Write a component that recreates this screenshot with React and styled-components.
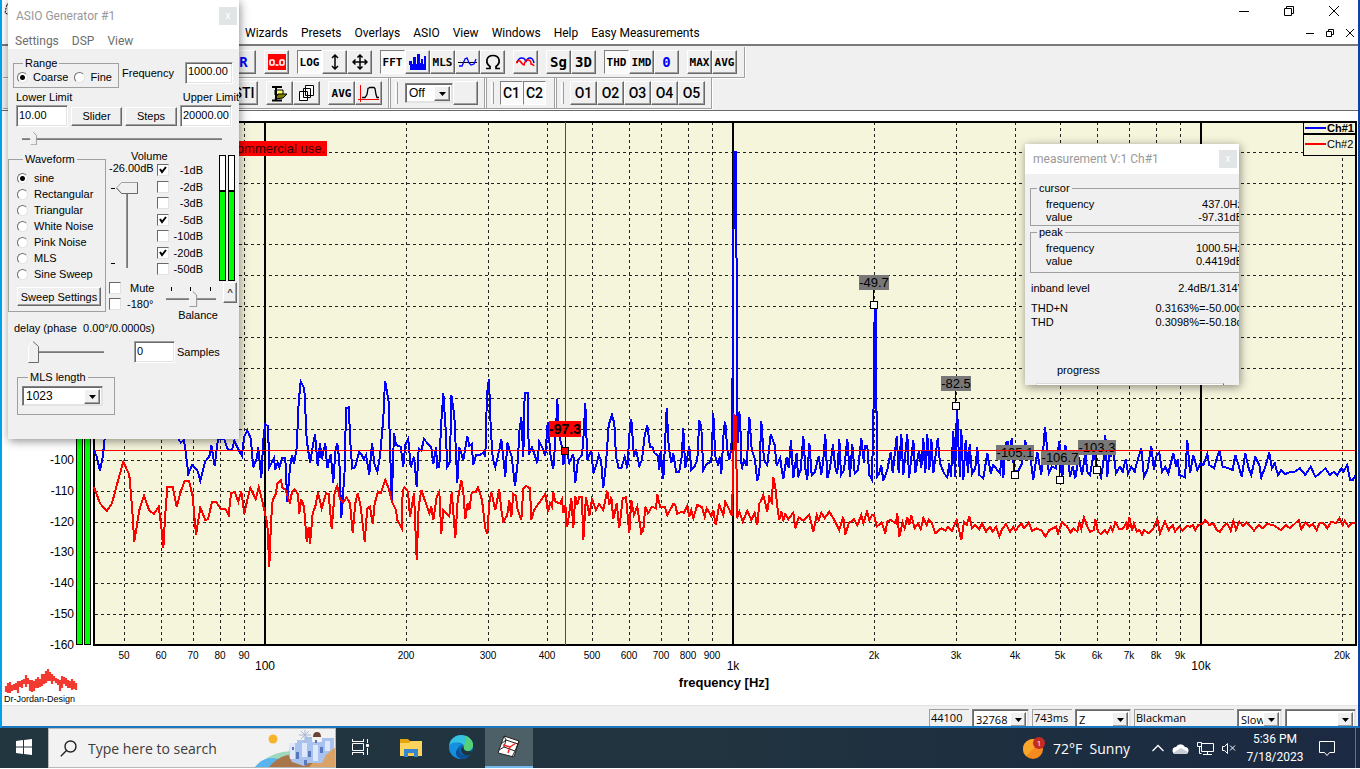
import React from "react";
import styled, { createGlobalStyle, css } from "styled-components";

const SYS = `"Liberation Sans", Arial, sans-serif`;
const UI = `"Open Sans", "Noto Sans", sans-serif`;
const MENU = `Roboto, "Open Sans", sans-serif`;

const GlobalStyle = createGlobalStyle`
  *, *::before, *::after { box-sizing: border-box; }
  body { margin: 0; background: #fff; font-family: ${SYS}; font-size: 11px; color: #000; }
  button, input, select { font: inherit; color: inherit; margin: 0; padding: 0; border-radius: 0; }
`;

const svgUrl = (w, h, body) =>
  `url("data:image/svg+xml,${encodeURIComponent(
    `<svg xmlns='http://www.w3.org/2000/svg' width='${w}' height='${h}' viewBox='0 0 ${w} ${h}'>${body}</svg>`
  )}")`;

const raised = css`
  background: #f0f0f0;
  border: 1px solid;
  border-color: #fff #696969 #696969 #fff;
  box-shadow: inset -1px -1px 0 #a0a0a0;
`;
const sunken = css`
  background: #fff;
  border: 1px solid;
  border-color: #a0a0a0 #fff #fff #a0a0a0;
  box-shadow: inset 1px 1px 0 #696969, inset -1px -1px 0 #e3e3e3;
`;

/* ---------- desktop and main window ---------- */
const Desktop = styled.div`
  position: relative;
  display: flex;
  flex-direction: column;
  min-height: 100vh;
  padding-bottom: 1px;
  overflow: hidden;
`;
const MainWindow = styled.main`
  flex: 1;
  display: flex;
  flex-direction: column;
  border: 2px solid #1b76bd;
  border-left-color: #00a2ed;
  border-right-color: #1242a0;
  border-top: 0;
  background: #fff;
`;
const TitleBar = styled.header`
  display: flex;
  align-items: center;
  justify-content: space-between;
  height: 24px;
  padding: 0 19px 2px 2px;
`;
const CaptionButtons = styled.div`
  display: flex;
  gap: ${(p) => p.$gap}px;
`;
const GlyphButton = styled.button`
  display: flex;
  background: none;
  border: 0;
`;
const MenuBar = styled.nav`
  display: flex;
  align-items: center;
  height: 20px;
  padding: 0 4px 2px 243px;
  font-family: ${MENU};
  font-size: 12px;
`;
const MenuItems = styled.div`
  display: flex;
  flex: 1;
  gap: 13px;
`;
const MenuItem = styled.button`
  background: none;
  border: 0;
  line-height: 16px;
  color: ${(p) => (p.$dim ? "#6d6d6d" : "#000")};
`;

/* ---------- tool bars ---------- */
const ToolBars = styled.div`
  height: 67px;
  padding: 1px 0 0 1px;
  background: #f0f0f0;
  border-top: 2px solid #7a7a7a;
  border-bottom: 1px solid #696969;
`;
const ToolRow = styled.div`
  display: flex;
  align-items: center;
  height: 31px;
  width: ${(p) => p.$w}px;
  padding-left: ${(p) => p.$start}px;
  border-bottom: 1px solid #a0a0a0;
  border-right: 1px solid #a0a0a0;
  box-shadow: 0 1px 0 #fff, 1px 0 0 #fff;
`;
const ToolGroup = styled.div`
  display: flex;
  align-items: center;
  flex: none;
  margin-right: ${(p) => p.$after || 8}px;
`;
const ToolButton = styled.button`
  display: flex;
  flex: none;
  align-items: center;
  justify-content: center;
  width: ${(p) => p.$w || 25}px;
  height: 24px;
  ${raised}
  white-space: nowrap;
  font-family: "DejaVu Sans Mono", monospace;
  font-weight: 700;
  font-size: ${(p) => p.$size || 11}px;
  color: ${(p) => p.$color || "#000"};
  ${(p) =>
    p.$sans &&
    css`
      font-family: ${MENU};
      font-weight: 500;
    `}
  ${(p) =>
    p.$on &&
    css`
      background: #fafafa;
      border-color: #808080 #fff #fff #808080;
      box-shadow: none;
    `}
`;
const Divider = styled.i`
  flex: none;
  width: 3px;
  height: 30px;
  border: solid #a0a0a0;
  border-width: 0 1px;
  background: #fff;
`;
const Grip = styled.i`
  flex: none;
  width: 3px;
  height: 22px;
  margin: 0 ${(p) => p.$after}px 0 4px;
  border-right: 1px solid #a0a0a0;
  border-left: 1px solid #fff;
`;

/* ---------- shared controls ---------- */
const ComboFrame = styled.span`
  position: relative;
  display: block;
  flex: none;
  width: ${(p) => p.$w}px;
  height: ${(p) => p.$h || 20}px;
  ${sunken}
  border-color: #808080 #e3e3e3 #e3e3e3 #808080;
  font-family: ${(p) => p.$font || SYS};
  font-size: ${(p) => p.$size || 12}px;
  &::after {
    content: "";
    position: absolute;
    top: 2px;
    right: 2px;
    bottom: 1px;
    width: 16px;
    ${raised}
    background: #f0f0f0 ${svgUrl(7, 4, "<path d='M0 0h7L3.5 4z'/>")} center no-repeat;
    pointer-events: none;
  }
`;
const ComboSelect = styled.select`
  appearance: none;
  display: block;
  width: 100%;
  height: 100%;
  padding: 0 18px 0 3px;
  border: 0;
  background: transparent;
  outline: 0;
`;
function Combo({ label, value, ...rest }) {
  return (
    <ComboFrame {...rest}>
      <ComboSelect aria-label={label} defaultValue={value}>
        <option>{value}</option>
      </ComboSelect>
    </ComboFrame>
  );
}
const TextBox = styled.input`
  width: ${(p) => p.$w}px;
  height: 22px;
  padding: 0 1px 3px 2px;
  ${sunken}
  font-size: 11px;
  outline: 0;
`;
const PushButton = styled.button`
  width: ${(p) => p.$w}px;
  height: ${(p) => p.$h || 19}px;
  ${raised}
  white-space: nowrap;
`;
const Radio = styled.input.attrs({ type: "radio" })`
  appearance: none;
  flex: none;
  width: 11px;
  height: 11px;
  border-radius: 50%;
  border: 1px solid;
  border-color: #707070 #e3e3e3 #e3e3e3 #707070;
  background: #fff;
  &:checked {
    background: radial-gradient(circle, #000 2px, #fff 3px);
  }
`;
const Check = styled.input.attrs({ type: "checkbox" })`
  appearance: none;
  flex: none;
  width: 12px;
  height: 12px;
  border: 1px solid;
  border-color: #696969 #e3e3e3 #e3e3e3 #696969;
  background: #fff;
  &:checked {
    background: #fff ${svgUrl(8, 8, "<path d='M1 3l2 3 4-5' fill='none' stroke='black' stroke-width='2'/>")} center no-repeat;
  }
`;
const GroupBox = styled.fieldset`
  margin: ${(p) => p.$top || 0}px 0 0;
  padding: ${(p) => p.$pad || "0"};
  min-width: 0;
  flex: none;
  width: ${(p) => p.$w}px;
  height: ${(p) => p.$h}px;
  border: 1px solid #a0a0a0;
`;
const Legend = styled.legend`
  margin-left: ${(p) => p.$x || 6}px;
  padding: 0 2px;
  line-height: 12px;
`;
const Option = styled.label`
  display: flex;
  align-items: center;
  gap: ${(p) => p.$gap || 6}px;
  line-height: 16px;
  white-space: nowrap;
`;

/* ---------- floating windows ---------- */
const FloatingWindow = styled.section`
  position: absolute;
  left: ${(p) => p.$x}px;
  top: ${(p) => p.$y}px;
  width: ${(p) => p.$w}px;
  height: ${(p) => p.$h}px;
  overflow: hidden;
  background: #f0f0f0;
  box-shadow: 1px 2px 9px rgba(0, 0, 0, 0.45);
`;
const FloatTitle = styled.header`
  display: flex;
  align-items: center;
  justify-content: space-between;
  height: ${(p) => p.$h}px;
  padding: 0 2px 0 8px;
  background: #fff;
  color: #999;
  font-family: ${MENU};
  font-size: 12px;
`;
const CloseBox = styled.button`
  width: 18px;
  height: 18px;
  border: 0;
  background: #e2e5e6;
  color: #fff;
  font-size: 10px;
  line-height: 12px;
`;
const FloatMenu = styled.nav`
  display: flex;
  gap: 13px;
  height: 17px;
  padding-left: 7px;
  background: #fff;
  font-family: ${MENU};
  font-size: 12px;
`;

const Line = styled.div`
  display: flex;
  align-items: ${(p) => p.$align || "center"};
  justify-content: ${(p) => p.$justify || "flex-start"};
  gap: ${(p) => p.$gap || 0}px;
  margin-top: ${(p) => p.$top || 0}px;
  padding: 0 ${(p) => p.$right || 0}px 0 ${(p) => p.$left || 0}px;
  line-height: 12px;
  white-space: nowrap;
`;
const Stack = styled.div`
  display: flex;
  flex: none;
  flex-direction: column;
  align-items: ${(p) => p.$align || "flex-start"};
  width: ${(p) => p.$w}px;
  padding-top: ${(p) => p.$top || 0}px;
`;
const FieldLabel = styled.label`
  width: ${(p) => (p.$w ? `${p.$w}px` : "auto")};
`;

const downThumb = svgUrl(11, 22, "<path d='M.5 5.5l4-5h1l5 5v16H.5z' fill='#f0f0f0' stroke='#fff'/><path d='M5 .5l5.500 5v16H.5' fill='none' stroke='#696969'/>");
const sideThumb = svgUrl(22, 12, "<path d='M5.500 .5h16v11h-16L.5 6z' fill='#f0f0f0' stroke='#a0a0a0'/><path d='M21.500 .5v11h-16L.5 6' fill='none' stroke='#696969'/>");

const HSlider = styled.input.attrs({ type: "range" })`
  appearance: none;
  display: block;
  width: ${(p) => p.$w}px;
  height: ${(p) => p.$h}px;
  background: linear-gradient(#a0a0a0, #696969) center / 100% 2px no-repeat;
  &::-webkit-slider-thumb {
    appearance: none;
    width: ${(p) => p.$t}px;
    height: ${(p) => p.$h}px;
    background: ${downThumb} center / 100% 100% no-repeat;
  }
`;
const VSlider = styled.input.attrs({ type: "range" })`
  appearance: none;
  display: block;
  writing-mode: vertical-lr;
  direction: rtl;
  width: 22px;
  height: 86px;
  background: linear-gradient(90deg, #a0a0a0, #696969) center / 2px 100% no-repeat;
  &::-webkit-slider-thumb {
    appearance: none;
    width: 22px;
    height: 12px;
    background: ${sideThumb} center no-repeat;
  }
`;
const VTicks = styled.span`
  width: 4px;
  height: 76px;
  margin-top: 6px;
  border: solid #000;
  border-width: 1px 0;
`;
const HTicks = styled.span`
  display: flex;
  justify-content: space-between;
  width: 40px;
  height: 4px;
  border: solid #000;
  border-width: 0 1px;
  &::before {
    content: "";
    width: 1px;
    margin-left: 18px;
    background: #000;
  }
`;
const DbList = styled.div`
  display: flex;
  flex-direction: column;
  justify-content: space-between;
  height: 113px;
  margin-top: 1px;
`;
const DbOption = styled.label`
  display: flex;
  align-items: center;
  justify-content: space-between;
  width: 46px;
  line-height: 14px;
`;
const MeterPair = styled.div`
  display: flex;
  gap: 2px;
  height: 126px;
`;
const Meter = styled.i`
  width: 7px;
  border: 1px solid #000;
  background: linear-gradient(#fff 34px, #000 34px, #000 36px, #0f0 36px);
`;

const MEASURE_ROWS = {
  cursor: [["frequency", "437.0Hz"], ["value", "-97.31dB"]],
  peak: [["frequency", "1000.5Hz"], ["value", "0.4419dB"]],
};
const MeasureBody = styled.div`
  width: 220px;
  padding: 8px 0 0 5px;
`;
const Reading = styled.div`
  display: flex;
  justify-content: space-between;
  line-height: ${(p) => p.$lh || 13}px;
  margin: ${(p) => p.$top || 0}px -${(p) => p.$over || 0}px 0 0;
  padding: 0 2px 0 ${(p) => p.$left || 1}px;
`;
const ProgressTrack = styled.div`
  width: 188px;
  height: 8px;
  margin: 6px 0 0 6px;
  border: 1px solid #dadada;
  border-right: 1px solid #696969;
  background: #fff;
`;

/* ---------- status bar ---------- */
const StatusBar = styled.footer`
  display: flex;
  justify-content: flex-end;
  gap: 3px;
  height: 21px;
  overflow: hidden;
  padding: 3px 2px 0 0;
  background: #f0f0f0;
  border-top: 1px solid #e3e3e3;
`;
const StatusCell = styled.span`
  width: ${(p) => p.$w}px;
  height: 17px;
  padding-left: 1px;
  border: solid #a0a0a0;
  border-width: 1px 0 0 1px;
  font-family: ${UI};
  font-size: 11px;
  line-height: 16px;
`;

/* ---------- task bar ---------- */
const TaskBar = styled.footer`
  display: flex;
  align-items: center;
  height: 40px;
  background: linear-gradient(90deg, #22363f, #20333f 55%, #1b2942);
  color: #fff;
  font-family: ${UI};
`;
const TaskButton = styled.button`
  display: flex;
  align-items: center;
  justify-content: center;
  width: ${(p) => p.$w || 48}px;
  height: 40px;
  margin-right: ${(p) => p.$after || 0}px;
  border: 0;
  border-bottom: 2px solid ${(p) => (p.$active ? "#76b9ed" : "transparent")};
  background: ${(p) => (p.$active ? "#4e6067" : "none")};
`;
const SearchBox = styled.label`
  display: flex;
  align-items: center;
  width: 288px;
  height: 40px;
  padding-left: 11px;
  background: #f2f2f2;
  border: 1px solid #b5b9bb;
`;
const SearchInput = styled.input`
  width: 167px;
  height: 30px;
  margin-left: 11px;
  border: 0;
  outline: 0;
  background: transparent;
  font-size: 14px;
  &::placeholder { color: #3c3c3c; opacity: 1; }
`;
const Tray = styled.div`
  display: flex;
  align-items: center;
  margin-left: auto;
  padding-right: 4px;
`;
const Weather = styled.button`
  display: flex;
  align-items: center;
  gap: 8px;
  margin-right: 22px;
  background: none;
  border: 0;
  color: #fff;
  font-size: 14px;
  white-space: pre;
`;
const TrayIcons = styled.div`
  display: flex;
  align-items: center;
  gap: 8px;
`;
const Clock = styled.time`
  width: 60px;
  margin: 0 14px 0 8px;
  text-align: center;
  font-family: ${MENU};
  font-size: 12px;
  line-height: 18px;
`;
const ShowDesktop = styled.i`
  width: 1px;
  height: 40px;
  margin-left: 19px;
  background: #66707e;
`;

/* ---------- spectrum chart ---------- */
const ChartArea = styled.div`
  flex: 1;
  background: #fff;
`;
const ChartSvg = styled.svg`
  display: block;
  width: 100%;
  height: auto;
  font-family: ${SYS};
`;

/* Every sweep section is [origin x, samples], three units to a pixel, measured from y = 360. */
const toPath = (sections) =>
  "M" +
  sections
    .map(([ox, samples]) =>
      samples
        .split(" ")
        .map((s) => {
          const [x, y] = s.split(",").map(Number);
          return `${(ox + x / 3).toFixed(1)} ${(360 + y / 3).toFixed(1)}`;
        })
        .join("L")
    )
    .join("L");

const BLUE = toPath([
  [90, "12,270 20,290 30,333 38,290 44,236 60,150 250,180 266,240 272,247 282,240 290,300 295,342 300,330 307,315 322,330 331,362 345,305 358,290 364,255 374,318 384,237 402,236 414,270 426,270 433,242 445,268 456,288 462,232 472,211 482,235 490,322 500,295 505,262 514,355 520,240 526,193 534,198 538,322 545,308 552,295 556,330 563,307 568,322 577,293 586,295 592,425 600,320 606,285 612,312 620,265 626,125 632,65 643,85 650,240 660,308 668,260 675,222 683,318 690,250 695,298 706,250 712,325 722,282 730,368 736,275 742,250 748,300 754,475 764,330 768,145 776,142 782,265 787,325 795,322 808,275 815,285 822,298 828,285 838,345 846,248 853,310 862,335 870,290 880,175 885,62 896,125 905,428 912,218 918,255 932,260 940,320 946,255 955,237 962,322 972,290"],
  [400, "50,380 56,265 64,272 72,238 94,262 100,312 108,262 112,322 118,320 123,200 130,100 137,210 142,320 150,305 154,105 163,165 172,368 178,262 190,300 202,228 208,258 215,252 220,315 228,285 240,285 250,278 256,290 261,100 267,57 272,200 278,295 286,322 298,270 304,237 316,350 322,248 335,290 345,378 354,298 358,215 364,170 370,290 374,100 384,98 386,285 396,262 404,285 412,310 418,245 427,262 436,288 443,187 452,290 460,328 468,210 472,118 477,225 486,260 490,315 498,262 508,308 520,282 526,368 534,300 546,285 550,240 556,130 562,300 574,270 580,340 588,318 596,285 603,300 610,385 618,310 626,195 636,165 643,190 648,290 656,325 664,325 674,290 682,325 690,195 694,178 702,290 708,268 718,318 726,300 734,225 742,195 750,260 758,262 764,280 774,288 778,330 782,272 790,358 800,145 806,260 814,310 820,280 828,335 838,335 845,290 850,205 856,325 868,258 874,330 884,318 892,300 898,180 904,200 910,330 920,312 934,305 940,160 946,290 954,312 960,290 964,342 972,200 976,185 982,270 988,300 994,265 996,210 998,0 1002,-624 1008,-624 1011,0 1013,250 1016,155"],
  [740, "0,165 5,328 12,300 20,318 24,240 28,170 35,270 44,295 52,362 58,340 64,182 72,300 82,315 92,222 104,255 110,318 120,295 130,358 140,290 146,325 153,240 160,355 170,278 174,352 182,330 190,228 196,325 202,360 208,248 215,345 225,335 236,288 244,345 250,300 256,222 262,355 270,325 279,252 285,320 292,342 298,237 303,345 312,330 322,237 330,350 337,252 344,340 354,330 364,235 372,310 374,258 382,258 388,345 396,360 401,120 404,-165 407,-165 411,350 418,340 424,315 430,362 442,330 452,275 458,340 470,228 476,340 484,222 490,345 502,222 507,355 520,240 526,340 537,270 544,325 550,235 556,340 562,222 568,330 574,237 580,340 593,235 600,310 612,340 622,352 628,310 633,350 640,212 645,350 651,135 656,275 660,350 664,210 670,360 677,240 684,340 689,252 696,342 706,325 712,262 718,345 730,355 742,280 752,340 760,315 768,325 780,340 785,290 790,355 797,248 804,246 810,290 815,235 822,330 834,335 846,310 856,240 862,290 872,300 880,360 892,275 904,345"],
  [1040, "15,200 22,270 26,340 36,320 48,325 58,242 66,360 76,255 84,290 90,350 98,320 106,355 116,290 126,345 136,280 142,335 150,345 162,275 170,320 183,352 190,310 196,225 202,350 210,255 214,285 220,275 228,340 240,320 248,335 257,297 264,340 274,320 284,335 290,310 304,265 312,350 322,330 334,258 342,330 348,290 358,278 366,335 376,320 385,340 400,280 408,320 413,298 418,345 435,352 442,240 450,340 460,285 472,330 482,310 490,315 502,282 508,315 522,325 538,270 548,320 566,325 578,330 586,285 594,310 605,350 616,280 626,325 634,345 646,292 658,315 664,352 676,320 688,278 696,325 704,310 714,345 724,330 736,342 752,335 764,335 780,325 796,345 812,320 826,350 842,338 856,325 870,345 882,335 892,345 904,325 910,335 922,315 930,360 938,360 946,348"],
]);
const RED = toPath([
  [90, "12,382 30,430 50,453 66,430 82,370 100,305 118,345 126,440 133,545 148,450 162,407 178,452 192,462 206,440 214,500 220,565 226,460 232,382 248,382 260,440 272,395 284,362 297,362 308,410 318,525 331,443 346,480 354,478 366,427 378,425 392,447 406,447 416,465 423,400 434,395 445,425 454,393 463,462 472,420 481,383 497,417 506,382 514,410 526,465 532,490 538,620 543,485 548,420 558,400 562,370 572,360 578,385 586,388 600,430 606,395 614,388 624,402 628,462 634,418 642,440 650,545 656,500 660,552 668,460 676,440 684,398 695,445 708,400 716,402 725,508 734,395 742,377 750,418 760,427 770,412 780,430 788,520 796,430 803,400 812,440 824,545 832,445 840,440 848,492 854,430 864,395 872,400 886,360 896,385 906,425 918,450 922,480"],
  [400, "5,505 8,390 14,382 24,395 30,470 42,400 50,600 56,440 64,390 74,420 88,460 94,440 100,480 110,410 118,395 124,522 130,450 148,468 155,395 166,535 173,420 184,360 190,395 196,478 203,430 208,450 215,398 228,395 234,382 246,420 256,505 262,522 268,430 274,395 286,450 298,388 304,450 310,485 322,465 328,420 334,472 340,402 348,408 352,445 364,480 370,385 378,378 390,385 394,480 402,450 420,425 436,402 444,455 450,430 456,440 460,395 466,425 480,430 486,418 490,460 496,435 502,500 514,415 520,505 526,408 532,435 538,412 546,412 550,540 558,410 568,468 576,418 588,450 598,432 610,450 622,392 628,435 634,410 640,478 650,430 658,505 668,415 678,412 688,520 694,420 702,465 712,440 724,520 730,510 736,440 744,460 756,440 768,445 772,402 780,440 794,440 802,465 820,432 826,435 832,462 844,455 852,458 862,437 868,470 874,450 880,475 892,435 906,442 914,470 920,445 934,468 940,450 947,495 958,435 970,465 976,425 986,445 996,468 999,340 1003,165 1008,170 1011,475 1018,455"],
  [740, "8,485 22,452 34,480 44,460 52,495 58,430 62,425 70,405 82,455 88,410 95,425 100,352 106,380 112,440 118,480 124,455 130,480 136,463 145,478 160,458 166,505 176,472 190,482 208,465 220,515 230,465 236,480 244,458 254,475 268,455 280,475 298,510 310,470 316,525 326,490 342,478 352,495 364,465 370,490 381,455 388,480 396,465 402,465 410,500 425,487 436,520 442,485 452,480 468,490 472,460 478,530 488,487 494,505 502,472 508,495 514,465 524,505 534,490 542,508 550,475 560,495 566,480 576,490 586,520 604,505 616,512 624,500 636,512 650,480 664,540 672,485 680,495 688,468 696,505 705,495 718,508 726,490 738,515 750,500 758,515 768,500 778,530 786,508 798,492 810,515 820,500 826,512 844,490 852,505 866,488 876,512 890,505"],
  [1040, "5,512 16,530 28,510 48,500 54,520 66,487 80,498 92,518 100,505 112,515 118,488 124,508 132,472 142,500 150,515 162,510 166,478 174,515 182,522 194,510 202,520 212,500 218,512 226,487 238,508 250,505 258,490 262,510 268,470 276,512 282,490 290,515 298,510 306,525 312,510 326,520 340,505 352,478 360,520 368,500 375,485 386,510 398,495 405,515 418,500 428,512 440,498 450,500 458,495 466,510 475,495 486,492 496,480 508,495 520,490 530,510 540,515 552,498 562,490 572,512 580,482 588,510 598,485 610,498 620,488 632,500 642,512 656,495 668,505 682,492 700,495 722,510 738,495 750,505 776,480 784,508 796,488 808,500 818,492 830,510 838,490 850,488 862,505 874,485 888,490 898,475 908,495 914,482 926,500 936,488 946,488"],
]);

const fx = (f) => Math.round(265 + 468 * Math.log10(f / 100));
const MINOR = [50, 60, 70, 80, 90, 200, 300, 400, 500, 600, 700, 800, 900, 2000, 3000, 4000, 5000, 6000, 7000, 8000, 9000, 20000];
const MAJOR = [100, 1000, 10000];
const hz = (f) => (f >= 1000 ? `${f / 1000}k` : `${f}`);
const LEVELS = Array.from({ length: 17 }, (_, i) => ({ db: -i * 10, y: Math.round(152 + i * 30.8) }));
const HARMONICS = [
  { t: "-49.7", x: 874, box: 275, y: 305, w: 30 },
  { t: "-82.5", x: 956, box: 376, y: 406, w: 30 },
  { t: "-105.1", x: 1015, box: 445, y: 475, w: 38 },
  { t: "-106.7", x: 1060, box: 450, y: 480, w: 38 },
  { t: "-103.3", x: 1097, box: 440, y: 470, w: 38 },
];
const LOGO_BARS = [[6,686,692],[8,683,693],[10,682,693],[12,685,691],[14,684,690],[16,683,690],[18,681,693],[20,681,687],[22,680,688],[24,679,684],[26,675,687],[28,678,684],[30,680,691],[32,680,692],[34,681,691],[36,679,688],[38,677,688],[40,679,687],[42,674,686],[44,674,684],[46,671,683],[48,669,681],[50,672,681],[52,674,684],[54,676,681],[56,678,683],[58,679,685],[60,680,691],[62,676,688],[64,677,684],[66,678,686],[68,680,688],[70,681,688],[72,679,690],[74,681,689],[76,683,690]];

function SpectrumChart() {
  return (
    <ChartArea>
      <ChartSvg viewBox="2 111 1356 594" role="img" aria-label="Spectrum">
        <g shapeRendering="crispEdges">
          <rect x="95" y="122" width="1260" height="522" fill="#f5f5dc" />
          <g stroke="#222" strokeWidth="1" strokeDasharray="3 3">
            {LEVELS.map((l) => <path key={l.db} d={`M95 ${l.y + 0.5}H1355`} />)}
            {MINOR.map((f) => <path key={f} d={`M${fx(f) + 0.5} 122V644`} />)}
          </g>
          {MAJOR.map((f) => <path key={f} d={`M${fx(f)} 122V645`} stroke="#000" strokeWidth="2" />)}
          <rect x="94" y="122" width="1262" height="523" fill="none" stroke="#000" strokeWidth="2" />
          <path d="M76.500 400V644.500H82.500V400M84.500 400V644.500H90.500V400" fill="#0f0" stroke="#000" />
          <path d={BLUE} fill="none" stroke="#00f" strokeWidth="2" />
          <path d={RED} fill="none" stroke="#f00" strokeWidth="2" />
        </g>
        <rect x="150" y="141" width="177" height="15" fill="#f00" />
        <text x="325" y="153" fontSize="13" textAnchor="end" fill="#300">commercial use.</text>
        {HARMONICS.map((h) => (
          <g key={h.t} shapeRendering="crispEdges">
            <path d={`M${h.x - 0.5} ${h.box + 14}V${h.y}`} stroke="#000" />
            <rect x={h.x - 3.5} y={h.y - 3.5} width="7" height="7" fill="#fff" stroke="#000" />
            <rect x={h.x - h.w / 2} y={h.box} width={h.w} height="15" fill="#787878" />
            <text x={h.x} y={h.box + 12} fontSize="13" textAnchor="middle">{h.t}</text>
          </g>
        ))}
        <g shapeRendering="crispEdges">
          <path d="M95 450.500H1355M565.500 122V645" stroke="#f00" />
          <path d="M565.500 437V447" stroke="#000" />
          <rect x="549" y="421" width="32" height="16" fill="#f00" />
          <rect x="561.500" y="447.500" width="7" height="7" fill="#f00" stroke="#000" />
          <rect x="1303.500" y="122.500" width="52" height="33" fill="#f5f5dc" stroke="#000" />
          <path d="M1303 134H1356" stroke="#000" strokeWidth="2" />
          <path d="M1305 128H1326" stroke="#00f" strokeWidth="2" />
          <path d="M1305 144H1326" stroke="#f00" strokeWidth="2" />
        </g>
        <text x="565" y="434" fontSize="14" fontWeight="700" textAnchor="middle">-97.3</text>
        <text x="1327" y="132" fontSize="11" fontWeight="700">Ch#1</text>
        <text x="1327" y="148" fontSize="11">Ch#2</text>
        {LEVELS.slice(10).map((l) => (
          <text key={l.db} x="74" y={l.y + 4} fontSize="12" textAnchor="end">{l.db}</text>
        ))}
        {MINOR.map((f) => <text key={f} x={fx(f)} y="659" fontSize="10" textAnchor="middle">{hz(f)}</text>)}
        {MAJOR.map((f) => <text key={f} x={fx(f)} y="670" fontSize="12" textAnchor="middle">{hz(f)}</text>)}
        <text x="724" y="687" fontSize="13" fontWeight="700" textAnchor="middle">frequency [Hz]</text>
        <path d={LOGO_BARS.map(([x, a, b]) => `M${x} ${a}V${b}`).join("")} stroke="#f33a30" strokeWidth="2.200" />
        <text x="4" y="702" fontSize="9">Dr-Jordan-Design</text>
      </ChartSvg>
    </ChartArea>
  );
}

/* ---------- icons ---------- */
const Icon = ({ w = 16, h = w, children, ...rest }) => (
  <svg width={w} height={h} viewBox={`0 0 ${w} ${h}`} fill="none" stroke="#000" {...rest}>{children}</svg>
);
const AppIcon = () => (
  <Icon>
    <path d="M3 1l11 3-3 10-10-4z" fill="#fff" strokeDasharray="2 1" />
    <path d="M4 4l5 3 3-2M5 9l4-2 1 4" stroke="#e22" />
  </Icon>
);
const UpDown = () => <Icon w={10} h={16}><path d="M5 1v14M2 4l3-3 3 3M2 12l3 3 3-3" strokeWidth="1.500" /></Icon>;
const FourWay = () => <Icon><path d="M8 1v14M1 8h14M5.500 3.500L8 1l2.500 2.500M5.500 12.500L8 15l2.500-2.500M3.500 5.500L1 8l2.500 2.500M12.500 5.500L15 8l-2.500 2.500" strokeWidth="1.500" /></Icon>;
const Recorder = () => (
  <Icon w={18} h={16}>
    <path d="M0 0h18v16H0z" fill="#f00" stroke="none" />
    <rect x="2" y="6" width="4" height="5" rx="1" stroke="#fff" strokeWidth="1.600" />
    <rect x="12" y="6" width="4" height="5" rx="1" stroke="#fff" strokeWidth="1.600" />
    <path d="M7.500 11h3" stroke="#fff" strokeWidth="1.600" />
  </Icon>
);
const Bars = () => <Icon w={17} h={16} stroke="none"><path fill="#00f" d="M0 7h3v3h1V3h3v7h1V0h3v9h1V5h2v5h1V2h2v14H1V11H0z" /></Icon>;
const Wave = () => (
  <Icon w={19} h={12}>
    <path d="M0 6.500h19" />
    <path d="M1 10h3l3-7 2-1 2 5 2 2 3-1 2-5" stroke="#00f" strokeWidth="1.300" />
  </Icon>
);
const Curves = () => (
  <Icon w={19} h={10} strokeWidth="1.500">
    <path d="M1 6q1-5 5-5 3 0 4 4 1-4 4-4t4 5" stroke="#00f" />
    <path d="M0 6q2-3 4-2 3 4 4 4 1-5 4-5 3 0 3 4 2 0 3 2" stroke="#f00" />
  </Icon>
);
const Ohm = () => <Icon w={16} h={16}><path d="M1 14.500h4v-2C0 9 1 1.500 8 1.500s8 7.500 3 11v2h4" strokeWidth="1.700" /></Icon>;
const OpenIcon = () => (
  <Icon w={17} h={17}>
    <path d="M4 5h8v5H4z" fill="#ff6" />
    <path d="M4 14l3-5h9l-4 4z" fill="#808000" />
    <path d="M1 2h10M1 15.500h10M5 2v13" strokeWidth="2" />
  </Icon>
);
const CopyIcon = () => (
  <Icon w={16} h={16} fill="#fff">
    <path d="M6.500 .5h8v10h-8zM4.500 3.500h7v9h-7zM.5 6.500h8v9h-8z" />
  </Icon>
);
const BandPass = () => (
  <Icon w={21} h={17}>
    <path d="M2.500 0v17M0 14.500h21" stroke="#f00" />
    <path d="M4 12.500h3l2-3 1-6 2-1h4l1 1 1 6 1 3h2" strokeWidth="1.300" />
  </Icon>
);
const WindowGlyph = ({ kind, s = 10 }) => (
  <Icon w={s}>
    {kind === "min" && <path d={`M0 ${s / 2 + 0.5}h${s}`} />}
    {kind === "max" && <path d={`M.5 2.500h${s - 3}v${s - 3}H.5zM2.500 2.500v-2h${s - 3}v${s - 3}h-2`} />}
    {kind === "close" && <path d={`M0 0L${s} ${s}M${s} 0L0 ${s}`} />}
  </Icon>
);
const Caption = ({ gap, size }) => (
  <CaptionButtons $gap={gap}>
    {[["min", "Minimize"], ["max", "Restore"], ["close", "Close"]].map(([k, n]) => (
      <GlyphButton key={k} aria-label={n}><WindowGlyph kind={k} s={size} /></GlyphButton>
    ))}
  </CaptionButtons>
);
const Town = () => (
  <Icon w={80} h={38} stroke="none">
    <circle cx="18" cy="10" r="4.500" fill="#f7b32b" />
    <path d="M8 32Q18 23 36 22v16H4z" fill="#9fd9bd" />
    <path d="M0 38Q10 25 27 31l8 7z" fill="#59b4ef" />
    <path d="M14 38Q28 22 44 27l14 6 22-14v19z" fill="#a9764a" />
    <path d="M54 38q12-14 26-19v19z" fill="#d9a266" />
    <path d="M35 14h7v-3h8V8h7v5h10V9h12v10l-8 7-4 8H53l-4 3-12-4-3-6z" fill="#a9c3ee" />
    <path d="M35 14h5v16h-5zM47 14h5v14h-5zM58 16h5v16h-5zM70 12h5v10h-5z" fill="#dfe9fb" />
    <path d="M41 23h3v7h-3zM53 22h3v6h-3zM65 18h3v6h-3zM49 31h3v5h-3zM37 18h2v3h-2zM60 11h2v3h-2z" fill="#5878bd" />
    <path d="M58 8q0-5 4-5t4 5z" fill="#6b4334" />
    <path d="M50 1v13M44 6h12M46 2l8 8M54 2l-8 8" stroke="#a9b6d0" strokeWidth="1" />
  </Icon>
);
const Explorer = () => (
  <Icon w={22} h={19} stroke="none">
    <path d="M0 1h8l2 2h11v4H0z" fill="#e5a50f" />
    <path d="M0 5h9l2-2h11v15H0z" fill="#ffd45c" />
    <path d="M4 11h14v8h-4v-4H8v4H4z" fill="#3486d0" />
    <path d="M8 15h6v2H8z" fill="#ffc83d" />
  </Icon>
);
const Edge = () => (
  <svg width="24" height="24" viewBox="0 0 24 24">
    <circle cx="12" cy="12" r="12" fill="#0c69ba" />
    <path d="M0 11C1 4 6 0 12 0c7 0 12 5 12 10 0 4-3 6-6 6-4 0-3-2-3-4 0-3-4-5-8-4-3 0-6 1-7 3z" fill="#35c1df" />
    <path d="M17 1c5 2 7 6 7 9 0 4-3 6-6 6-4 0-3-2-3-4 0-4 3-6 2-11z" fill="#55d178" />
    <path d="M0 12C1 7 9 6 13 10c-4 0-5 4-3 8 2 5 8 4 11 1-3 5-10 7-15 3-4-2-6-6-6-10z" fill="#1490df" />
    <path d="M11 12c-2 3 0 8 4 8 3 0 5-1 7-2-2 4-6 6-10 6-5-1-8-8-1-12z" fill="#0b4f96" />
    <path d="M14 12c1 4 4 5 8 4l2 1-3 3c-5 1-9-1-9-5 0-2 1-3 2-3z" fill="#20343f" />
  </svg>
);
const BoxApp = () => (
  <Icon w={24} h={24}>
    <path d="M7 1l15 5-5 16-16-4z" fill="#fff" stroke="#222" />
    <path d="M4 9l5-4 12 4M2 15l5-3 11 4M9 5l-2-4M7 12l2-7M15 22l3-6 4-10" stroke="#222" />
    <path d="M6 10l7 2 6-4M13 12l-2 6" stroke="#f22" strokeWidth="1.500" />
  </Icon>
);

/* ---------- floating dialogs ---------- */
const WAVEFORMS = ["sine", "Rectangular", "Triangular", "White Noise", "Pink Noise", "MLS", "Sine Sweep"];
const STEPS_DB = [[1, true], [2, false], [3, false], [5, true], [10, false], [20, true], [50, false]];

function GeneratorWindow() {
  return (
    <FloatingWindow $x={8} $y={0} $w={231} $h={439}>
      <FloatTitle $h={32}>
        ASIO Generator #1
        <CloseBox aria-label="Close">x</CloseBox>
      </FloatTitle>
      <FloatMenu>
        {["Settings", "DSP", "View"].map((m) => <MenuItem key={m} $dim>{m}</MenuItem>)}
      </FloatMenu>
      <Line $top={8} $left={5} $gap={3}>
        <GroupBox $w={106} $h={31} $pad="0 3px">
          <Legend>Range</Legend>
          <Line $gap={6}>
            <Option $gap={5}><Radio name="range" defaultChecked />Coarse</Option>
            <Option $gap={5}><Radio name="range" />Fine</Option>
          </Line>
        </GroupBox>
        <FieldLabel $w={60} htmlFor="freq">Frequency</FieldLabel>
        <TextBox id="freq" $w={48} defaultValue="1000.00" />
      </Line>
      <Line $top={3} $left={8} $right={0} $justify="space-between">
        <label htmlFor="lower">Lower Limit</label>
        <label htmlFor="upper">Upper Limit</label>
      </Line>
      <Line $top={2} $left={8} $gap={3}>
        <TextBox id="lower" $w={52} defaultValue="10.00" />
        <PushButton $w={51}>Slider</PushButton>
        <PushButton $w={52}>Steps</PushButton>
        <TextBox id="upper" $w={52} defaultValue="20000.00" />
      </Line>
      <Line $top={5} $left={14}>
        <HSlider aria-label="Frequency" $w={200} $h={13} $t={7} defaultValue={4} />
      </Line>
      <Line $top={5} $align="flex-start">
        <GroupBox $w={98} $h={159} $top={3} $pad="5px 4px 0 8px">
          <Legend>Waveform</Legend>
          {WAVEFORMS.map((w, i) => (
            <Option key={w}><Radio name="waveform" defaultChecked={i === 0} />{w}</Option>
          ))}
          <Line $top={5}><PushButton $w={84}>Sweep Settings</PushButton></Line>
        </GroupBox>
        <Stack $w={113}>
          <Line $left={25}>Volume</Line>
          <Line $left={3} $align="flex-start" $gap={2}>
            <Stack $w={46}>
              <span>-26.00dB</span>
              <Line $top={8} $left={2} $align="flex-start" $gap={1}>
                <VTicks />
                <VSlider aria-label="Volume" defaultValue={100} />
              </Line>
            </Stack>
            <DbList>
              {STEPS_DB.map(([db, on]) => (
                <DbOption key={db}><Check defaultChecked={on} />-{db}dB</DbOption>
              ))}
            </DbList>
          </Line>
          <Line $top={4} $left={3} $align="flex-start" $gap={12}>
            <Stack $w={45}>
              <Option $gap={9}><Check />Mute</Option>
              <Option $gap={6}><Check />-180°</Option>
            </Stack>
            <Stack $w={50} $align="center" $top={7}>
              <HTicks />
              <HSlider id="balance" $w={50} $h={16} $t={10} defaultValue={56} />
              <Line $top={2} $left={14}><label htmlFor="balance">Balance</label></Line>
            </Stack>
          </Line>
        </Stack>
        <Stack $w={18} $top={5}>
          <MeterPair><Meter /><Meter /></MeterPair>
          <Line $top={1} $left={4}><PushButton $w={14} $h={21}>^</PushButton></Line>
        </Stack>
      </Line>
      <Line $top={1} $left={6}>delay (phase&nbsp; 0.00°/0.0000s)</Line>
      <Line $top={7} $left={20} $gap={30}>
        <HSlider aria-label="Delay" $w={76} $h={22} $t={11} defaultValue={0} />
        <Line $gap={2}>
          <TextBox id="samples" $w={41} defaultValue="0" />
          <label htmlFor="samples">Samples</label>
        </Line>
      </Line>
      <Line $top={8} $left={9}>
        <GroupBox $w={98} $h={44} $pad="3px 4px">
          <Legend>MLS length</Legend>
          <Combo label="MLS length" value="1023" $w={81} />
        </GroupBox>
      </Line>
    </FloatingWindow>
  );
}

function MeasurementWindow() {
  return (
    <FloatingWindow $x={1025} $y={144} $w={214} $h={241}>
      <FloatTitle $h={30}>
        measurement V:1 Ch#1
        <CloseBox aria-label="Close">x</CloseBox>
      </FloatTitle>
      <MeasureBody>
        {Object.entries(MEASURE_ROWS).map(([name, rows]) => (
          <GroupBox key={name} $w={216} $h={name === "peak" ? 47 : 44} $pad="4px 0 0">
            <Legend $x={6}>{name}</Legend>
            {rows.map(([k, v]) => <Reading key={k} $left={15}><span>{k}</span><span>{v}</span></Reading>)}
          </GroupBox>
        ))}
        <Reading $top={9} $over={2}><span>inband level</span><span>2.4dB/1.314V</span></Reading>
        <Reading $top={6} $lh={14} $over={7}><span>THD+N</span><span>0.3163%=-50.00dB</span></Reading>
        <Reading $lh={14} $over={7}><span>THD</span><span>0.3098%=-50.18dB</span></Reading>
        <Reading $top={35} $left={27}><span>progress</span></Reading>
        <ProgressTrack />
      </MeasureBody>
    </FloatingWindow>
  );
}

export default function App() {
  return (
    <Desktop>
      <GlobalStyle />
      <MainWindow>
        <TitleBar>
          <AppIcon />
          <Caption gap={35} size={10} />
        </TitleBar>
        <MenuBar>
          <MenuItems>
            {["Wizards", "Presets", "Overlays", "ASIO", "View", "Windows", "Help", "Easy Measurements"].map((m) => (
              <MenuItem key={m}>{m}</MenuItem>
            ))}
          </MenuItems>
          <Caption gap={12} size={8} />
        </MenuBar>
        <ToolBars>
          <ToolRow $w={742} $start={228}>
            <ToolGroup><ToolButton $size={14} $color="#00f">R</ToolButton></ToolGroup>
            <ToolGroup><ToolButton aria-label="Recorder"><Recorder /></ToolButton></ToolGroup>
            <ToolGroup>
              <ToolButton $on>LOG</ToolButton>
              <ToolButton aria-label="Scale vertically"><UpDown /></ToolButton>
              <ToolButton aria-label="Scale both axes"><FourWay /></ToolButton>
            </ToolGroup>
            <ToolGroup>
              <ToolButton $on>FFT</ToolButton>
              <ToolButton aria-label="Octave bands"><Bars /></ToolButton>
              <ToolButton>MLS</ToolButton>
              <ToolButton aria-label="Scope"><Wave /></ToolButton>
              <ToolButton aria-label="Impedance"><Ohm /></ToolButton>
            </ToolGroup>
            <ToolGroup><ToolButton aria-label="Overlays"><Curves /></ToolButton></ToolGroup>
            <ToolGroup>
              <ToolButton $size={14}>Sg</ToolButton>
              <ToolButton $size={14}>3D</ToolButton>
            </ToolGroup>
            <ToolGroup>
              <ToolButton $on>THD</ToolButton>
              <ToolButton>IMD</ToolButton>
              <ToolButton $size={14} $color="#00f">0</ToolButton>
            </ToolGroup>
            <ToolGroup>
              <ToolButton>MAX</ToolButton>
              <ToolButton>AVG</ToolButton>
            </ToolGroup>
          </ToolRow>
          <ToolRow $w={709} $start={227}>
            <ToolGroup><ToolButton $w={28} $size={14} $sans>STI</ToolButton></ToolGroup>
            <ToolGroup>
              <ToolButton $w={27} aria-label="Open"><OpenIcon /></ToolButton>
              <ToolButton $w={27} aria-label="Copy"><CopyIcon /></ToolButton>
            </ToolGroup>
            <ToolGroup $after={6}>
              <ToolButton $w={27}>AVG</ToolButton>
              <ToolButton $w={27} aria-label="Filter"><BandPass /></ToolButton>
            </ToolGroup>
            <Divider />
            <Grip $after={7} />
            <ToolGroup $after={6}>
              <Combo label="Average" value="Off" $w={48} />
              <ToolButton aria-label="Reset" />
            </ToolGroup>
            <Divider />
            <Grip $after={6} />
            <ToolGroup>
              <ToolButton $w={23} $size={14} $sans $on>C1</ToolButton>
              <ToolButton $w={23} $size={14} $sans $on>C2</ToolButton>
            </ToolGroup>
            <Divider />
            <Grip $after={6} />
            {[1, 2, 3, 4, 5].map((n) => (
              <ToolButton key={n} $w={27} $size={14} $sans>{`O${n}`}</ToolButton>
            ))}
          </ToolRow>
        </ToolBars>
        <SpectrumChart />
        <StatusBar>
          <StatusCell $w={40}>44100</StatusCell>
          <Combo label="FFT size" value="32768" $w={57} $font={UI} $size={11} />
          <StatusCell $w={40}>743ms</StatusCell>
          <Combo label="Weighting" value="Z" $w={56} $font={UI} $size={11} />
          <StatusCell $w={100}>Blackman</StatusCell>
          <Combo label="Speed" value="Slow" $w={45} $font={UI} $size={11} />
          <Combo label="Mode" value=" " $w={71} $font={UI} $size={11} />
        </StatusBar>
      </MainWindow>
      <TaskBar>
        <TaskButton aria-label="Start">
          <Icon stroke="none"><path fill="#fff" d="M0 2l7-1v6.500H0zM8 1l8-1v7.500H8zM0 8.500h7V15l-7-1zM8 8.500h8V16l-8-1z" /></Icon>
        </TaskButton>
        <SearchBox>
          <Icon w={17} stroke="#222" strokeWidth="1.400"><circle cx="10.500" cy="6.500" r="5.500" /><path d="M6.500 10.500L.8 16.200" /></Icon>
          <SearchInput placeholder="Type here to search" aria-label="Search" />
          <Town />
        </SearchBox>
        <TaskButton aria-label="Task view" $after={2}>
          <Icon w={17} h={16} stroke="#fff">
            <path d="M.5 0v3M11.500 0v3M.5 4.500h11v7H.5zM.5 13v3M11.500 13v3M.5 2.500h11M.5 13.500h11M15.500 0v4M15.500 9v7" />
            <path d="M14.500 5.500h2v2h-2z" fill="#fff" />
          </Icon>
        </TaskButton>
        <TaskButton aria-label="File Explorer" $w={50}><Explorer /></TaskButton>
        <TaskButton aria-label="Microsoft Edge" $w={49}><Edge /></TaskButton>
        <TaskButton aria-label="Analyzer" $active><BoxApp /></TaskButton>
        <Tray>
          <Weather>
            <Icon w={22} h={23} stroke="none">
              <circle cx="10" cy="12" r="10" fill="#f58a1f" />
              <path d="M0 12A10 10 0 0 1 17 5L3 19A10 10 0 0 1 0 12z" fill="#f9a62b" />
              <circle cx="16" cy="6" r="6" fill="#c62b23" />
              <text x="16" y="9" fontSize="8" textAnchor="middle" fill="#fff">1</text>
            </Icon>
            {"72°F  Sunny"}
          </Weather>
          <TrayIcons>
            <Icon w={12} h={8} stroke="#fff" strokeWidth="1.300"><path d="M.5 7L6 1.500 11.500 7" /></Icon>
            <Icon w={17} h={11} stroke="none"><path d="M4 11a3.500 3.500 0 0 1 0-7 5 5 0 0 1 9 0 3.500 3.500 0 0 1 0 7z" fill="#fff" /><path d="M1 10l8-5 7 4-1 2H3z" fill="#c9ced4" /></Icon>
            <Icon w={17} h={14} stroke="#fff"><path d="M4.500 2.500h12v8h-12zM10.500 10.500v3M6 13.500h9M.5 1.500h4v4h-4zM2.500 5.500v7h2" /></Icon>
            <Icon w={15} h={12} stroke="#fff"><path d="M.5 4.500h2l3-3v10l-3-3h-2zM8 3.500l5 5M13 3.500l-5 5" /></Icon>
          </TrayIcons>
          <Clock>5:36 PM 7/18/2023</Clock>
          <Icon w={17} h={17} stroke="#fff"><path d="M.5 1.500h15v11h-5l-2.500 3-2.500-3h-5z" /></Icon>
          <ShowDesktop />
        </Tray>
      </TaskBar>
      <GeneratorWindow />
      <MeasurementWindow />
    </Desktop>
  );
}
